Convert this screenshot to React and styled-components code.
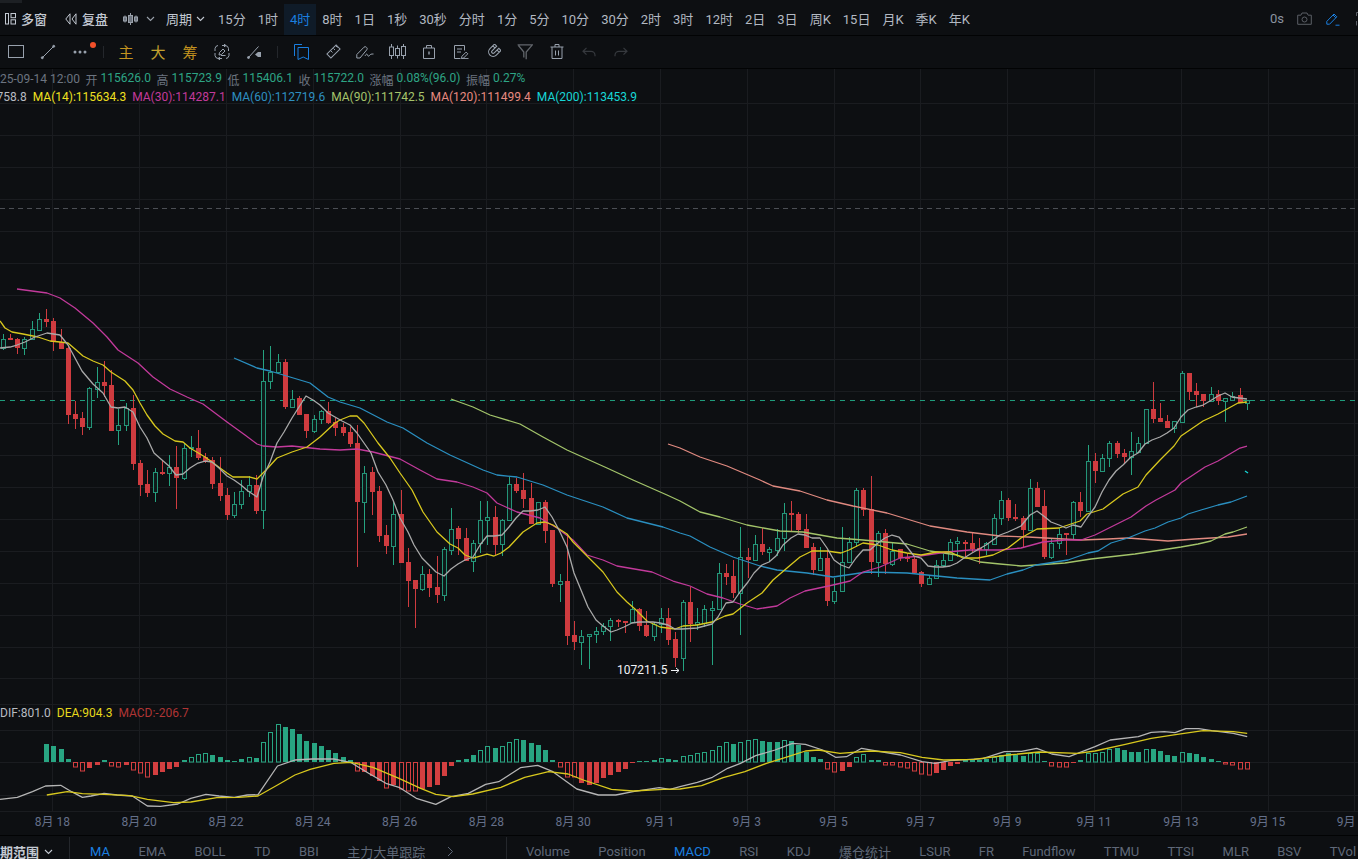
import React from "react";
import styled, { createGlobalStyle } from "styled-components";

const FONT = `Roboto, "Noto Sans CJK SC", sans-serif`;
const BG = "#0d0f12";
const GRID = "#1a1c20";
const GREEN = "#25a380";
const RED = "#cf3b3f";

const Global = createGlobalStyle`
  html, body { margin: 0; padding: 0; background: ${BG}; overflow: hidden; }
  #root { width: 1358px; height: 859px; overflow: hidden; }
`;

const Page = styled.div`
  width: 1358px;
  height: 859px;
  display: flex;
  flex-direction: column;
  overflow: hidden;
  background: ${BG};
  font-family: ${FONT};
`;
const TopBar = styled.header`
  position: relative;
  flex: none;
  box-sizing: border-box;
  height: 36px;
  display: flex;
  align-items: stretch;
  border-bottom: 1px solid #020304;
  padding-left: 5px;
  white-space: nowrap;
  overflow: hidden;
`;
const Nub = styled.i`
  position: absolute;
  left: 0;
  top: 0;
  width: 22px;
  height: 3px;
  background: #1d2024;
`;
const MainBtn = styled.div`
  display: flex;
  align-items: center;
  gap: ${p => p.$gap ?? 5}px;
  margin-left: ${p => p.$ml ?? 0}px;
  color: ${p => p.$c ?? "#c3c9d2"};
  font-size: 13px;
  font-weight: ${p => p.$w ?? 500};
  padding-top: 2px;
  box-sizing: border-box;
`;
const TabSpacer = styled.div`
  flex: none;
  width: 7px;
`;
const Tab = styled.div`
  display: flex;
  align-items: center;
  padding: ${p => (p.$active ? "0 6px 2px" : "2px 6px 0")};
  margin-top: ${p => (p.$active ? 4 : 0)}px;
  font-size: 13px;
  color: ${p => (p.$active ? "#1a7fe0" : "#b3b9c2")};
  background: ${p => (p.$active ? "#0f1b28" : "transparent")};
`;
const Spring = styled.div`
  flex: 1;
`;
const Timer = styled.div`
  display: flex;
  align-items: center;
  padding-top: 2px;
  font-size: 13px;
  color: #8a93a0;
  margin-right: 13px;
`;
const TopIcon = styled.div`
  display: flex;
  align-items: center;
  padding-top: 2px;
  margin-right: ${p => p.$mr ?? 14}px;
  color: ${p => p.$c};
`;

const DrawBar = styled.div`
  flex: none;
  box-sizing: border-box;
  height: 33px;
  display: flex;
  align-items: stretch;
  border-bottom: 1px solid #020304;
`;
const DrawBtn = styled.div`
  position: relative;
  flex: none;
  width: 32px;
  display: flex;
  align-items: center;
  justify-content: center;
  color: ${p => p.$c ?? "#98a1ad"};
  font-size: 15px;
  padding-bottom: 1px;
`;
const Badge = styled.i`
  position: absolute;
  left: 26px;
  top: 6px;
  width: 6px;
  height: 6px;
  border-radius: 50%;
  background: #f2502a;
`;
const Sep = styled.div`
  flex: none;
  width: ${p => p.$w}px;
  display: flex;
  align-items: center;
  justify-content: center;
  &::after {
    content: "";
    width: 1px;
    height: 12px;
    background: #24272c;
  }
`;

const ChartArea = styled.main`
  position: relative;
  flex: none;
  height: 766px;
  overflow: hidden;
`;
const ChartSvg = styled.svg`
  display: block;
`;
const AxisText = styled.text`
  font-family: ${FONT};
  font-size: 12px;
  fill: #65708a;
  text-anchor: middle;
`;
const MinText = styled.text`
  font-family: ${FONT};
  font-size: 12px;
  fill: #f1f3f6;
`;
const InfoBlock = styled.div`
  position: absolute;
  left: 0;
  top: 1px;
  font-size: 12px;
  white-space: nowrap;
`;
const InfoRow = styled.div`
  display: flex;
  height: 18px;
  align-items: center;
  gap: ${p => p.$gap}px;
  margin-left: ${p => p.$ml}px;
`;
const Pair = styled.span`
  display: flex;
  gap: 3px;
`;
const Label = styled.span`
  color: #6c7480;
`;
const Val = styled.span`
  color: #2da585;
`;
const Ma = styled.span`
  color: ${p => p.$c};
`;
const MacdRow = styled.div`
  position: absolute;
  left: 0;
  top: 637px;
  display: flex;
  gap: 6px;
  font-size: 12px;
  white-space: nowrap;
`;

const BottomBar = styled.footer`
  flex: none;
  box-sizing: border-box;
  height: 34px;
  display: flex;
  align-items: center;
  border-top: 1px solid #020304;
  padding-bottom: 2px;
  white-space: nowrap;
  font-size: 13px;
  color: #5f6878;
  overflow: hidden;
`;
const RangeBtn = styled.div`
  flex: none;
  width: 82px;
  margin-left: -13px;
  display: flex;
  align-items: center;
  gap: 5px;
  color: #c3c9d2;
  font-weight: 700;
`;
const BarDivider = styled.div`
  flex: none;
  width: 1px;
  height: 30px;
  background: #24272c;
  margin: ${p => p.$m};
`;
const IndGroup = styled.div`
  display: flex;
  align-items: center;
  gap: ${p => p.$gap}px;
`;
const Ind = styled.span`
  color: ${p => (p.$active ? "#1a7fe0" : "#5f6878")};
`;

/* ───────── icons ───────── */
const Ico = ({ w = 16, h = 16, vb, children, ...rest }) => (
  <svg width={w} height={h} viewBox={vb || `0 0 ${w} ${h}`} fill="none" stroke="currentColor" strokeWidth="1" {...rest}>
    {children}
  </svg>
);
const Chevron = () => (
  <Ico w={9} h={6} strokeWidth="1.1">
    <path d="M1 1l3.5 3.5L8 1" />
  </Ico>
);
const IWindows = () => (
  <Ico w={11} h={12}>
    <rect x=".5" y=".5" width="3" height="10.5" />
    <rect x="6" y=".5" width="4.5" height="4.2" />
    <rect x="6" y="6.8" width="4.5" height="4.2" />
  </Ico>
);
const IReplay = () => (
  <Ico w={12} h={12}>
    <path d="M5 .8L.8 6 5 11.2Z" />
    <path d="M11 .8L7 6l4 5.2Z" />
  </Ico>
);
const ICandleMini = () => (
  <Ico w={15} h={14} strokeWidth="1">
    <path d="M2 3.500v7M7.500 1v12M13 3.500v7" />
    <rect x=".5" y="5" width="3" height="4" fill="#6f7680" />
    <rect x="5.500" y="3.500" width="4" height="7" fill="#6f7680" />
    <rect x="11.500" y="5" width="3" height="4" fill="#6f7680" />
  </Ico>
);
const ICamera = () => (
  <Ico w={15} h={13}>
    <path d="M.7 3.2h3.2L5 1h5l1.1 2.2h3.2v9.1H.7z" />
    <circle cx="7.5" cy="7.5" r="2.5" />
  </Ico>
);
const IPenLine = () => (
  <Ico w={14} h={14}>
    <path d="M.8 12.2V9.4L8 2l2.8 2.8-7.2 7.4z" />
    <path d="M7 3l2.8 2.8M9.5 13.2h4" />
  </Ico>
);
const IFull = () => (
  <Ico w={14} h={14} style={{ marginRight: -12 }}>
    <path d="M.5 4V.5H4M.5 9v4.5M5 9.5h8M9 5.5v8" />
  </Ico>
);
const IRect = () => (
  <Ico w={16} h={13}>
    <rect x=".5" y=".5" width="15" height="12" />
  </Ico>
);
const ILine = () => (
  <Ico w={16} h={16}>
    <path d="M2.5 13.5L13.5 2.5" />
    <circle cx="2.3" cy="13.7" r="1" fill="currentColor" />
    <circle cx="13.7" cy="2.3" r="1" fill="currentColor" />
  </Ico>
);
const IDots = () => (
  <Ico w={14} h={4} stroke="none" fill="currentColor">
    <circle cx="2" cy="2" r="1.5" />
    <circle cx="7" cy="2" r="1.5" />
    <circle cx="12" cy="2" r="1.5" />
  </Ico>
);
const ICycle = () => (
  <Ico w={16} h={16}>
    <path d="M8 1.500h3.500a3.500 3.500 0 0 1 3 3V7M1 9v2.500a3.500 3.500 0 0 0 3 3H8" />
    <path d="M1 7V4.500a3.500 3.500 0 0 1 3-3M15 9v2.500a3.500 3.500 0 0 1-3 3" />
    <path d="M10 .2l2 1.300-2 1.300M6 13.200l-2 1.300 2 1.300" />
    <path d="M5 11l.5-2.500 3.500-3.500 2 2-3.500 3.500zM7 11.500h4.500" />
  </Ico>
);
const ILineArrow = () => (
  <Ico w={15} h={14}>
    <path d="M1.500 12.500L11.500 1.500" />
    <circle cx="1.500" cy="12.500" r="1" fill="currentColor" />
    <path d="M8 9.500l3-2.500h3v5h-3z" fill="currentColor" stroke="none" />
  </Ico>
);
const IBookmark = () => (
  <Ico w={15} h={16}>
    <path d="M8 .5H.5V12" />
    <path d="M4 3.500H14.500V15.500L9.200 13 4 15.500Z" />
  </Ico>
);
const IRuler = () => (
  <Ico w={15} h={15}>
    <rect x="-6.500" y="-2.800" width="13" height="5.600" transform="translate(7.500 7.500) rotate(-45)" />
    <path d="M5 7l1.500 1.500M7.500 4.500L9 6M10 2l1.500 1.500" />
  </Ico>
);
const IPenSquiggle = () => (
  <Ico w={18} h={14}>
    <path d="M.8 13V9.500L8 2.200a1.600 1.600 0 0 1 2.300 0l.4.400a1.600 1.600 0 0 1 0 2.300L4 13z" />
    <path d="M9 11c1-2 2-2.500 2.500-1s1.500 1.500 2.200.300 1.500-1.300 3.800-1.300" />
  </Ico>
);
const ICandles = () => (
  <Ico w={17} h={15}>
    <path d="M2.500 0v15M8.500 1.500v13M14.500 0v15" />
    <rect x=".5" y="3" width="4" height="8.500" fill="#0d0f12" />
    <rect x="6.500" y="4.500" width="4" height="7" fill="#0d0f12" />
    <rect x="12.500" y="2.500" width="4" height="9" fill="#0d0f12" />
  </Ico>
);
const IBox = () => (
  <Ico w={12} h={14}>
    <path d="M.5 3h11v10.500H.5zM3.500 3V.5h5V3" />
    <path d="M6 6.500v3" strokeWidth="1.400" />
  </Ico>
);
const INote = () => (
  <Ico w={15} h={14}>
    <path d="M10.500 5.500V.5H.5v13h6" />
    <path d="M3 4h5M3 7h4" />
    <path d="M7.500 13.500l.4-2.200 4.200-4.200 1.700 1.700-4.200 4.200zM7.500 13.600h7" />
  </Ico>
);
const IMagnet = () => (
  <Ico w={15} h={15} strokeWidth="1.100">
    <g transform="rotate(45 7.500 7.500)">
      <path d="M3 1.500v6.500a4.500 4.500 0 0 0 9 0V1.500H9V8a1.500 1.500 0 0 1-3 0V1.500zM3 4h3M9 4h3" />
    </g>
  </Ico>
);
const IFunnel = () => (
  <Ico w={16} h={16} strokeWidth="1.300">
    <path d="M.6.800h14.800L9.200 8v7.200M6.800 13.500V8L1.500 1.500" />
  </Ico>
);
const ITrash = () => (
  <Ico w={14} h={15}>
    <path d="M.5 3h13M5 3V.5h4V3M2 3v11.500h10V3M5.500 6.500v5M8.500 6.500v5" />
  </Ico>
);
const IUndo = ({ flip }) => (
  <Ico w={14} h={10} strokeWidth="1.200" style={flip ? { transform: "scaleX(-1)" } : undefined}>
    <path d="M4.500.8L1 4.300l3.500 3.300M1 4.300h8a4 4 0 0 1 4 4v1" />
  </Ico>
);

/* ───────── chart data ───────── */
const X0 = 2.7;
const DX = 7.233;
const xAt = i => X0 + i * DX;

// [bodyTop, bodyBottom, high, low, red?]
const CANDLES = `339 348 334 350 g|338 340 334 340 r|339 348 338 354 r|339 348 337 355 g|329 339 321 340 g|319 330 313 331 g|319 322 309 327 r|321 342 318 351 r|342 349 329 349 r|348 415 345 424 r|414 419 401 429 r|418 427 412 435 r|388 427 387 430 g|382 389 367 398 g|382 386 361 397 r|385 431 370 431 r|425 430 409 445 g|408 425 403 431 g|408 464 395 470 r|463 485 460 496 r|484 493 470 497 r|472 492 468 502 g|472 474 461 475 r|467 473 455 486 g|467 478 446 509 r|448 478 443 480 g|447 448 436 457 g|448 458 430 460 r|457 461 453 463 r|460 484 457 489 r|483 496 457 501 r|495 515 488 520 r|504 515 492 518 g|491 504 480 509 g|485 491 476 497 g|485 511 475 514 r|381 510 350 529 g|372 381 346 389 g|362 372 354 373 g|362 407 359 409 r|399 407 390 407 g|398 415 396 415 r|414 431 414 438 r|419 431 415 433 g|411 419 410 424 g|411 423 402 424 r|422 428 418 436 r|427 433 423 436 r|432 444 427 447 r|443 502 425 567 r|473 502 466 533 g|472 492 467 515 r|491 536 486 542 r|535 546 525 554 r|514 546 502 565 g|514 563 490 563 r|562 581 548 607 r|580 589 580 628 r|574 589 566 591 g|574 588 569 597 r|587 595 556 603 r|549 595 547 601 g|529 550 508 555 g|528 539 526 555 r|538 561 528 561 r|543 561 540 572 g|520 543 501 553 g|517 520 501 545 g|517 545 506 555 r|520 544 519 556 g|484 520 477 521 g|484 491 478 493 r|490 499 473 508 r|498 524 483 524 r|502 524 502 524 g|502 531 500 543 r|530 584 530 587 r|581 584 574 602 g|581 636 534 645 r|635 642 621 650 r|636 642 630 665 g|634 636 634 669 g|631 634 627 643 g|626 631 623 635 g|620 626 618 641 g|620 622 619 627 r|621 623 621 633 r|609 622 601 622 g|609 626 608 631 r|625 636 611 637 r|624 636 622 641 g|618 624 608 633 g|618 640 608 645 r|639 658 632 667 r|602 658 600 671 g|602 624 587 642 r|622 624 608 630 g|609 623 605 627 g|608 610 601 665 g|573 609 563 609 g|573 577 564 585 r|576 593 560 598 r|557 593 527 635 g|557 560 548 578 r|544 560 535 560 g|544 552 528 555 r|549 552 547 562 g|538 550 529 556 g|513 538 503 551 g|513 515 501 531 r|514 530 512 533 r|529 548 514 548 r|547 570 543 575 r|558 570 547 570 g|558 601 550 606 r|591 601 578 604 g|562 591 527 591 g|542 562 537 562 g|490 542 488 547 g|490 510 488 516 r|509 562 476 574 r|533 562 531 577 g|533 564 529 574 r|551 564 543 566 g|549 558 549 561 r|557 559 553 562 r|559 573 556 573 r|572 584 571 587 r|578 584 575 584 g|565 578 560 579 g|560 565 554 567 g|542 560 539 561 g|541 543 537 557 g|542 544 540 557 r|543 549 532 552 r|548 550 538 564 r|543 549 542 555 g|518 544 514 544 g|500 518 491 525 g|500 518 498 521 r|517 519 504 521 r|518 530 516 548 r|488 530 479 531 g|488 507 482 507 r|506 557 490 559 r|543 557 539 559 g|534 543 528 549 g|533 535 533 555 r|502 534 501 540 g|502 511 492 517 r|461 511 445 511 g|461 471 453 483 r|458 471 454 471 g|443 458 441 467 g|443 454 441 458 r|453 457 449 463 r|451 457 432 475 g|443 452 437 453 g|409 443 409 444 g|409 419 382 423 r|418 422 403 422 r|421 428 415 428 r|421 428 421 433 g|373 422 371 423 g|373 392 373 400 r|391 395 383 407 r|394 401 394 407 r|394 401 387 402 g|394 401 390 405 r|398 401 398 422 g|396 400 392 401 g|395 403 388 403 r|400 403 400 410 g`
  .split("|")
  .map(s => s.split(" "))
  .map(([t, b, h, l, c]) => ({ t: +t, b: +b, h: +h, l: +l, red: c === "r" }));

const MA7 = "0,348 10,347 17,345 25,342 35,337 47,333 60,335 68,345 75,358 82,371 93,384 103,393 111,407 118,408 125,407 133,412 140,427 147,438 154,453 162,460 169,466 176,475 183,474 190,468 198,463 205,461 212,462 219,468 227,476 234,480 241,485 248,491 257,497 263,477 270,462 277,443 284,432 292,418 299,407 306,396 313,400 320,405 328,413 335,417 342,421 350,425 357,433 364,443 371,453 378,472 386,485 393,500 400,518 408,532 414,545 422,558 429,565 436,572 444,576 451,569 458,564 465,560 473,557 480,545 487,536 494,536 502,535 509,527 516,518 523,511 530,511 538,510 545,507 552,517 559,530 567,547 574,573 581,590 588,607 596,620 603,626 611,632 617,630 624,627 632,623 639,622 646,622 653,622 660,623 668,625 675,629 682,629 697,628 712,624 718,617 726,603 733,602 740,592 748,582 754,573 762,565 769,562 776,556 783,545 791,538 798,534 805,535 812,538 820,538 827,548 834,560 841,565 849,568 856,558 863,550 870,550 878,543 885,538 892,535 899,537 907,547 914,556 921,558 928,566 936,567 943,567 950,566 957,563 964,558 972,553 979,549 986,545 993,540 1000,535 1008,532 1021,526 1030,515 1037,511 1045,517 1051,522 1059,525 1066,528 1073,525 1081,527 1087,518 1095,507 1102,492 1109,480 1116,471 1123,465 1131,457 1138,453 1145,444 1152,440 1160,437 1167,433 1174,428 1181,417 1188,410 1196,407 1203,405 1210,401 1218,396 1225,393 1232,397 1239,398 1247,399";
const MA14 = "0,321 5,328 12,332 23,334 38,337 50,341 60,342 68,343 75,349 83,356 93,361 103,365 111,372 125,381 133,390 140,403 147,415 155,426 163,434 175,441 183,442 190,448 205,457 212,462 220,468 227,473 233,477 245,477 250,477 257,479 267,469 277,458 292,452 307,447 320,437 335,423 340,420 350,416 357,416 364,423 371,433 378,443 390,458 400,473 412,490 423,512 437,532 450,544 458,548 465,555 473,558 487,554 494,556 501,553 509,547 523,532 537,523 545,522 553,525 567,534 573,542 588,557 603,572 617,592 627,602 635,609 647,621 660,627 675,629 683,626 697,625 712,622 725,616 733,614 747,603 762,593 773,580 787,568 800,557 812,551 827,551 841,553 849,550 863,543 878,545 892,550 907,553 921,555 937,552 950,552 963,558 978,558 993,555 1008,548 1021,538 1037,529 1059,528 1080,521 1087,514 1103,509 1123,494 1138,487 1146,475 1160,460 1174,446 1181,436 1203,421 1218,414 1238,403 1247,402";
const MA30 = "17,289 47,293 60,298 75,308 93,323 107,337 118,350 138,363 153,377 170,389 187,397 203,404 227,422 245,435 257,444 263,446 277,447 292,446 320,449 340,450 357,449 373,452 400,459 420,470 437,479 457,482 473,487 487,493 497,503 517,512 540,518 557,528 573,540 587,555 603,560 617,566 652,572 673,581 680,583 690,586 707,594 723,598 740,604 757,609 777,606 790,598 805,591 833,585 850,581 863,572 880,567 900,558 920,556 947,552 970,550 1000,550 1021,548 1043,542 1065,540 1081,540 1095,535 1121,522 1131,517 1146,506 1156,500 1175,490 1181,483 1205,467 1218,461 1240,448 1247,446";
const MA60 = "234,358 257,368 270,371 290,377 310,383 328,397 340,402 360,408 387,422 403,428 427,443 450,455 483,470 497,475 517,477 543,485 567,495 603,507 627,518 663,527 680,533 690,536 710,547 733,557 760,566 777,570 807,573 833,577 867,572 907,573 957,578 990,580 1007,574 1023,570 1036,565 1068,560 1088,553 1098,551 1111,543 1128,538 1145,531 1155,528 1168,522 1181,518 1188,514 1201,510 1218,505 1231,502 1247,496";
const MA90 = "451,399 473,407 490,415 520,424 543,437 567,450 607,468 633,480 667,495 680,501 700,512 720,517 747,525 780,531 803,532 837,538 863,540 907,544 930,551 957,555 980,562 1000,564 1021,566 1065,563 1091,559 1135,554 1181,547 1198,544 1211,541 1225,534 1233,532 1247,527";
const MA120 = "668,444 680,448 700,457 727,466 760,480 773,486 800,491 827,500 853,506 887,513 930,526 967,532 1000,536 1028,537 1081,540 1108,539 1128,538 1168,541 1195,539 1228,537 1247,534";
const MA200 = "1245,471 1248,473";

const SX3 = 2.306, SX4 = 2.313;
const mapZ = (str, x0, sx) =>
  str.split(" ").map(p => {
    const [a, b] = p.split(",").map(Number);
    return `${(x0 + a / sx).toFixed(1)},${(690 + b / 3).toFixed(1)}`;
  }).join(" ");
const DIF = mapZ("0,328 40,322 75,305 105,288 140,286 165,305 190,322 210,318 240,310 270,315 305,318 340,348 370,349 410,342 440,325 475,313 505,318 540,322 570,315 595,314 640,228 680,210 720,207 770,207 810,218 850,250 890,280 920,292 960,325 1005,343 1040,320 1080,310 1120,283 1150,275 1200,233 1240,226 1275,245 1330,297 1380,315 1420,315 1460,305 1520,293 1545,298", 0, SX3)
  + " " + mapZ("0,290 40,277 75,262 110,235 140,220 175,197 220,180 260,160 290,163 330,180 360,202 385,200 420,175 450,182 510,195 560,215 590,220 625,212 700,206 750,185 790,184 825,175 860,192 900,200 960,170 995,150 1060,140 1090,127 1120,125 1145,128 1170,116 1200,116 1230,122 1280,130 1312,140", 680, SX4);
const DEA = mapZ("108,315 155,305 190,311 240,313 300,317 340,328 400,338 440,336 500,323 550,322 595,318 640,285 680,255 715,238 770,220 810,217 860,232 920,265 970,295 1005,313 1045,320 1090,312 1155,292 1210,262 1265,245 1310,252 1345,270 1410,298 1460,303 1530,298", 0, SX3)
  + " " + mapZ("0,297 50,287 100,263 150,245 200,220 250,200 290,183 320,180 370,190 440,183 510,188 560,202 610,210 680,208 760,195 830,186 920,190 960,183 1030,163 1090,145 1150,133 1210,122 1280,125 1312,130", 680, SX4);

// histogram from candle index 6; "h" marks hollow
const HIST = "18 16 13 3 -5h -9h -6 -3 2 -4h -5h -3 -8h -11h -15h -13 -10 -7 -5 2 5h 8h 9h 7 5 2 1 3 5h 4 20h 30h 38h 35 33 28 21 19 16 12 9 5 2 -9h -10 -14 -19 -26h -23 -27h -29h -29h -27 -25 -23 -14 -4 2 3 7 12h 16h 14 16h 20h 23h 22 19 17 12 2 -5h -15h -15h -21 -23 -21 -16 -13 -10 -7 -1 1 1 2 4h 3 2 6h 7h 9h 10h 12h 16h 20h 18 20h 22h 23h 21 20 20 22h 21 17 10 5 3 -7h -10h -9 -5 5h 8h 2 2 -3h -3h -5h -6h -9h -12h -13h -11 -8 -4 -2 2 2 2 3 5h 7 9 7 6 9h 9h 1 -4h -5h -5h -1 2 9h 9h 10h 13h 14 12 10 10 13h 13 11 7 6 10h 9 8 5 3 1 -2h -3h -7h -7h"
  .split(" ")
  .map((s, k) => ({ i: k + 6, v: parseFloat(s), hollow: s.endsWith("h") }));

const H_GRID = [103, 135, 167, 199, 231, 263, 295, 327, 359, 391, 423, 455, 487, 519, 551, 583, 615, 647, 678, 704, 730, 762, 795, 811];
const V_GRID = Array.from({ length: 16 }, (_, k) => 52.4 + k * 86.8);
const X_LABELS = ["8月 18", "8月 20", "8月 22", "8月 24", "8月 26", "8月 28", "8月 30", "9月 1", "9月 3", "9月 5", "9月 7", "9月 9", "9月 11", "9月 13", "9月 15", "9月 17"];

const Candle = ({ c, i }) => {
  const xc = Math.round(xAt(i)) + 0.5;
  const color = c.red ? RED : GREEN;
  const h = Math.max(c.b - c.t, 1);
  return (
    <g>
      <line x1={xc} x2={xc} y1={c.h} y2={c.l} stroke={color} strokeWidth="1" />
      {c.red ? (
        <rect x={xc - 2.5} y={c.t} width={5} height={h} fill={color} />
      ) : (
        <rect x={xc - 2} y={c.t + 0.5} width={4} height={h} fill="#0e1a1a" stroke="#249478" strokeWidth="1" />
      )}
    </g>
  );
};
const Bar = ({ b }) => {
  const xc = Math.round(xAt(b.i)) + 0.5;
  const color = b.v > 0 ? "#28a582" : "#d33f40";
  const y = b.v > 0 ? 762 - b.v : 762;
  const h = Math.abs(b.v);
  return b.hollow ? (
    <rect x={xc - 2} y={y + 0.5} width={4} height={h - 0.5} fill="none" stroke={color} strokeWidth="1" />
  ) : (
    <rect x={xc - 2.5} y={y} width={5} height={h} fill={color} />
  );
};
const Curve = ({ pts, c, w = 1.3 }) => <polyline points={pts} fill="none" stroke={c} strokeWidth={w} strokeLinejoin="round" />;

const Chart = () => (
  <ChartSvg width="1358" height="766" viewBox="0 69 1358 766">
    {H_GRID.map(y => <line key={y} x1="0" x2="1358" y1={y + 0.5} y2={y + 0.5} stroke={GRID} />)}
    {V_GRID.map(x => <line key={x} x1={Math.round(x) + 0.5} x2={Math.round(x) + 0.5} y1="69" y2="811" stroke={GRID} />)}
    <line x1="0" x2="1358" y1="208.500" y2="208.500" stroke="#4c4f55" strokeDasharray="5 4" />
    <line x1="0" x2="1358" y1="400.500" y2="400.500" stroke="#1f9c7c" strokeDasharray="5 5" />
    {CANDLES.map((c, i) => <Candle key={i} c={c} i={i} />)}
    <Curve pts={MA200} c="#17d6d6" />
    <Curve pts={MA120} c="#e08a80" />
    <Curve pts={MA90} c="#a3c46a" />
    <Curve pts={MA60} c="#2a8fc0" />
    <Curve pts={MA30} c="#c23a9b" />
    <Curve pts={MA14} c="#d8c81e" />
    <Curve pts={MA7} c="#a9a9a9" />
    <MinText x="617" y="674">107211.5</MinText>
    <path d="M671 670.500h8M676 668l3 2.500-3 2.500" fill="none" stroke="#f1f3f6" strokeWidth="1" />
    {HIST.map(b => <Bar key={b.i} b={b} />)}
    <Curve pts={DIF} c="#b5b5b5" />
    <Curve pts={DEA} c="#d8c81e" />
    {X_LABELS.map((t, k) => <AxisText key={t} x={V_GRID[k]} y="826">{t}</AxisText>)}
  </ChartSvg>
);

const TIMES = ["15分", "1时", "4时", "8时", "1日", "1秒", "30秒", "分时", "1分", "5分", "10分", "30分", "2时", "3时", "12时", "2日", "3日", "周K", "15日", "月K", "季K", "年K"];
const INFO = [["开", "115626.0"], ["高", "115723.9"], ["低", "115406.1"], ["收", "115722.0"], ["涨幅", "0.08%(96.0)"], ["振幅", "0.27%"]];
const MAS = [
  ["MA(14):115634.3", "#f0e020"],
  ["MA(30):114287.1", "#c23a9b"],
  ["MA(60):112719.6", "#2e8fc0"],
  ["MA(90):111742.5", "#a6c46b"],
  ["MA(120):111499.4", "#e88a80"],
  ["MA(200):113453.9", "#17d6d6"],
];
const LEFT_INDS = ["MA", "EMA", "BOLL", "TD", "BBI", "主力大单跟踪"];
const RIGHT_INDS = ["Volume", "Position", "MACD", "RSI", "KDJ", "爆仓统计", "LSUR", "FR", "Fundflow", "TTMU", "TTSI", "MLR", "BSV", "TVol"];

export default function App() {
  return (
    <Page>
      <Global />
      <TopBar>
        <Nub />
        <MainBtn><IWindows />多窗</MainBtn>
        <MainBtn $ml={18}><IReplay />复盘</MainBtn>
        <MainBtn $ml={15} $gap={8} $c="#9aa1ab"><ICandleMini /><Chevron /></MainBtn>
        <MainBtn $ml={11} $gap={4} $w={400}>周期<Chevron /></MainBtn>
        <TabSpacer />
        {TIMES.map(t => <Tab key={t} $active={t === "4时"}>{t}</Tab>)}
        <Spring />
        <Timer>0s</Timer>
        <TopIcon $c="#5a5e65"><ICamera /></TopIcon>
        <TopIcon $c="#1a7fe0" $mr={16}><IPenLine /></TopIcon>
        <TopIcon $c="#5a5e65" $mr={0}><IFull /></TopIcon>
      </TopBar>
      <DrawBar>
        <DrawBtn><IRect /></DrawBtn>
        <DrawBtn><ILine /></DrawBtn>
        <DrawBtn><IDots /><Badge /></DrawBtn>
        <Sep $w={14} />
        <DrawBtn $c="#c3931f">主</DrawBtn>
        <DrawBtn $c="#c3a12f">大</DrawBtn>
        <DrawBtn $c="#c3931f">筹</DrawBtn>
        <DrawBtn><ICycle /></DrawBtn>
        <DrawBtn><ILineArrow /></DrawBtn>
        <Sep $w={15} />
        <DrawBtn $c="#1a7fe0"><IBookmark /></DrawBtn>
        <DrawBtn><IRuler /></DrawBtn>
        <DrawBtn><IPenSquiggle /></DrawBtn>
        <DrawBtn><ICandles /></DrawBtn>
        <DrawBtn><IBox /></DrawBtn>
        <DrawBtn><INote /></DrawBtn>
        <DrawBtn><IMagnet /></DrawBtn>
        <DrawBtn $c="#62666c"><IFunnel /></DrawBtn>
        <DrawBtn><ITrash /></DrawBtn>
        <DrawBtn $c="#36393e"><IUndo /></DrawBtn>
        <DrawBtn $c="#36393e"><IUndo flip /></DrawBtn>
      </DrawBar>
      <ChartArea>
        <Chart />
        <InfoBlock>
          <InfoRow $gap={5.6} $ml={-13.5}>
            <Label>2025-09-14 12:00</Label>
            {INFO.map(([k, v]) => (
              <Pair key={k}><Label>{k}</Label><Val>{v}</Val></Pair>
            ))}
          </InfoRow>
          <InfoRow $gap={6} $ml={-60}>
            <Ma $c="#b8bcc2">MA(7):115758.8</Ma>
            {MAS.map(([t, c]) => <Ma key={t} $c={c}>{t}</Ma>)}
          </InfoRow>
        </InfoBlock>
        <MacdRow>
          <Ma $c="#b8bcc2">DIF:801.0</Ma>
          <Ma $c="#e6d81c">DEA:904.3</Ma>
          <Ma $c="#b03535">MACD:-206.7</Ma>
        </MacdRow>
      </ChartArea>
      <BottomBar>
        <RangeBtn>周期范围<Chevron /></RangeBtn>
        <BarDivider $m="0 20px 0 0" />
        <IndGroup $gap={28.6}>
          {LEFT_INDS.map(t => <Ind key={t} $active={t === "MA"}>{t}</Ind>)}
          <Ico w={7} h={11} style={{ marginLeft: -7 }}><path d="M1 1l4.500 4.500L1 10" /></Ico>
        </IndGroup>
        <BarDivider $m="0 19px 0 52px" />
        <IndGroup $gap={28.3}>
          {RIGHT_INDS.map(t => <Ind key={t} $active={t === "MACD"}>{t}</Ind>)}
        </IndGroup>
      </BottomBar>
    </Page>
  );
}
